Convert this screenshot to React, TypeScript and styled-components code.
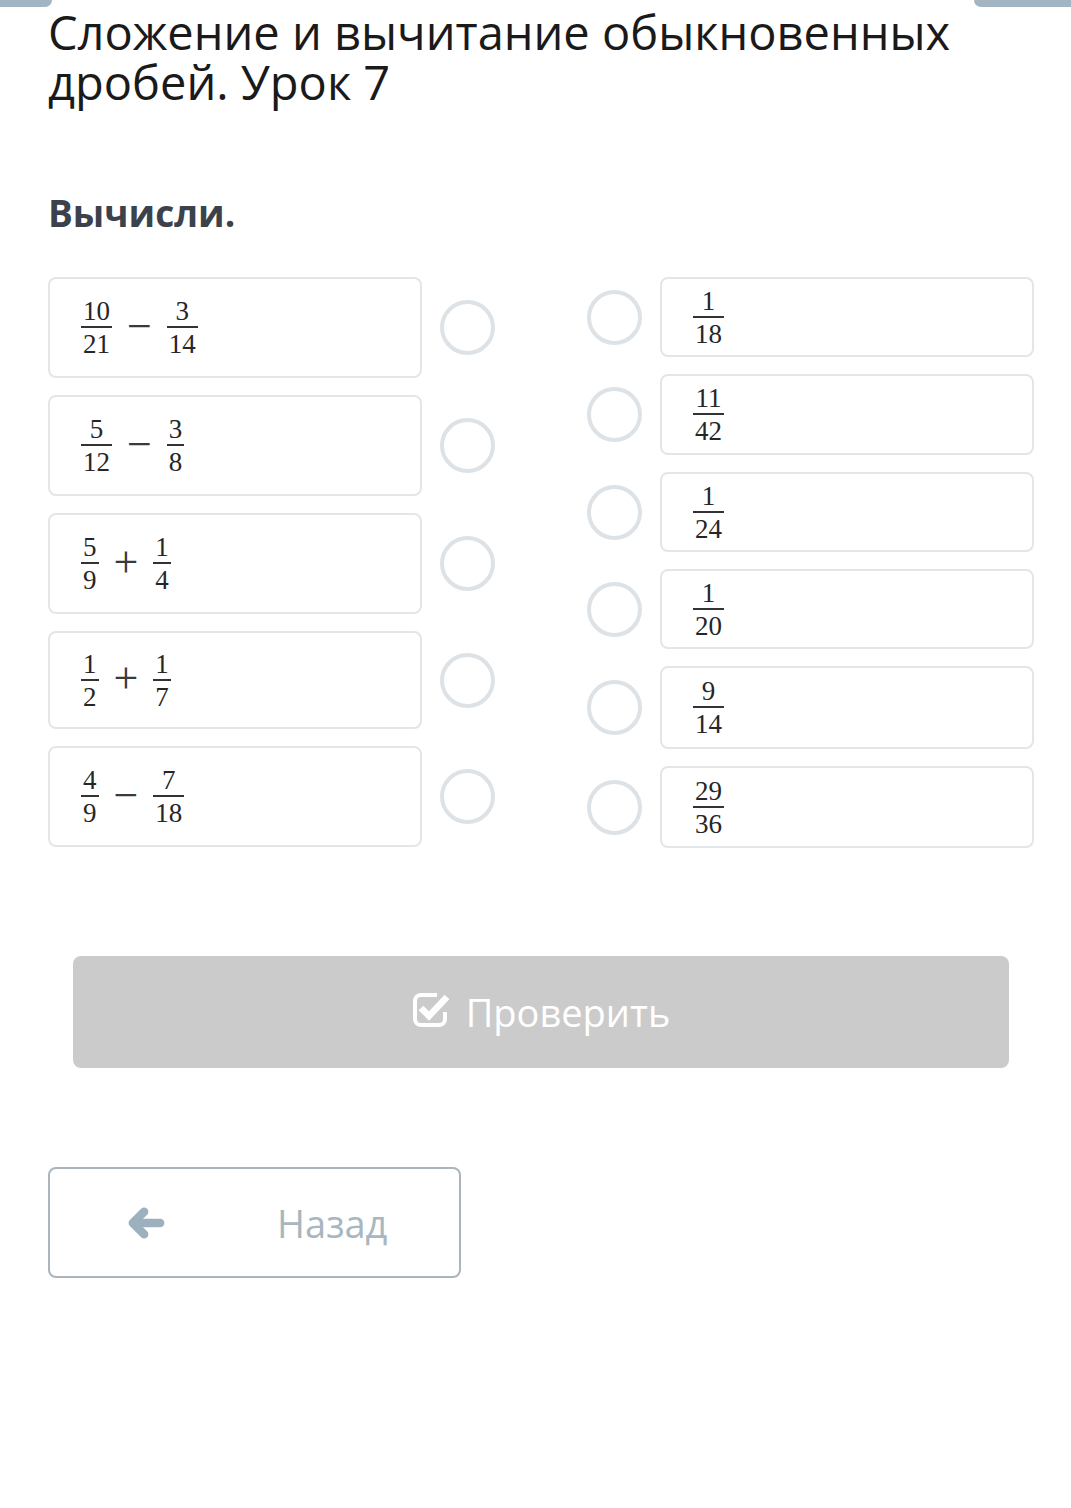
import React from "react";
import styled, { createGlobalStyle } from "styled-components";

const Global = createGlobalStyle`
  html, body { margin: 0; padding: 0; background: #ffffff; }
  body { font-family: "Open Sans", "Noto Sans", sans-serif; }
  * { box-sizing: border-box; }
`;

const Page = styled.div`
  width: 1071px;
  min-height: 1508px;
  background: #fff;
`;

const TopEdge = styled.div`
  display: flex;
  justify-content: space-between;
  height: 7px;
`;

const Tab = styled.div<{ $w: number; $side: "l" | "r" }>`
  width: ${(p) => p.$w}px;
  height: 7px;
  background: #a3b5c3;
  border-radius: ${(p) => (p.$side === "l" ? "0 0 12px 0" : "0 0 0 12px")};
`;

const Content = styled.div`
  padding: 0 37px 0 48px;
  display: flex;
  flex-direction: column;
`;

const Title = styled.h1`
  margin: 0;
  font-family: "Open Sans", sans-serif;
  font-weight: 400;
  font-size: 47px;
  line-height: 50px;
  color: #1a1a1a;
`;

const TitleLine = styled.span`
  display: block;
  height: 50px;
`;

const Task = styled.h2`
  margin: 84px 0 0 0;
  font-family: "Open Sans", sans-serif;
  font-weight: 700;
  font-size: 37px;
  line-height: 44px;
  color: #3b424c;
`;

const Columns = styled.div`
  margin-top: 42px;
  display: flex;
  justify-content: space-between;
`;

const Column = styled.div`
  display: flex;
  flex-direction: column;
  gap: 17px;
  width: 447px;
`;

const Row = styled.div`
  display: flex;
  align-items: center;
  gap: 18px;
`;

const Card = styled.div<{ $h: number }>`
  width: 374px;
  height: ${(p) => p.$h}px;
  border: 2px solid #e3e6e9;
  border-radius: 8px;
  display: flex;
  align-items: center;
  padding-left: 31px;
  background: #fff;
`;

const Circle = styled.div`
  width: 55px;
  height: 55px;
  border-radius: 50%;
  border: 4px solid #dde2e6;
  flex-shrink: 0;
`;

const Expr = styled.div`
  display: flex;
  align-items: center;
  gap: 15px;
  font-family: "Liberation Serif", "DejaVu Serif", serif;
  color: #262626;
`;

const Frac = styled.span`
  display: inline-flex;
  flex-direction: column;
  align-items: center;
  font-size: 27px;
  line-height: 26px;
`;

const Num = styled.span`
  padding: 0 2px 2px;
`;

const Den = styled.span`
  padding: 3px 2px 0;
  border-top: 2px solid #333;
  align-self: stretch;
  text-align: center;
`;

const Op = styled.span`
  font-size: 44px;
  line-height: 30px;
  color: #3a3a3a;
  margin-top: -2px;
`;

const Footer = styled.div`
  margin-top: 108px;
  display: flex;
  flex-direction: column;
`;

const CheckButton = styled.button`
  margin: 0 25px;
  height: 112px;
  border: none;
  border-radius: 8px;
  background: #cbcbcb;
  color: #fff;
  display: flex;
  align-items: center;
  justify-content: center;
  gap: 14px;
  font-family: "Open Sans", sans-serif;
  font-size: 38px;
  svg { width: 40px; height: 40px; margin-top: -4px; }
`;

const BackButton = styled.button`
  margin-top: 99px;
  width: 413px;
  height: 111px;
  border: 2px solid #aab5bc;
  border-radius: 8px;
  background: #fff;
  display: flex;
  align-items: center;
  padding-left: 77px;
  gap: 112px;
  font-family: "Open Sans", sans-serif;
  font-size: 38px;
  color: #a8b6c0;
  svg { width: 38px; height: 32px; }
`;

const CheckIcon = () => (
  <svg viewBox="0 0 40 40" fill="none">
    <path
      d="M25 5 H9 A6 6 0 0 0 3 11 V29 A6 6 0 0 0 9 35 H27 A6 6 0 0 0 33 29 V22"
      stroke="#fff"
      strokeWidth="4"
    />
    <path d="M9 18 L17 26 L35 7" stroke="#fff" strokeWidth="6.5" strokeLinejoin="miter" />
  </svg>
);

const ArrowIcon = () => (
  <svg viewBox="0 0 40 34" fill="none">
    <path d="M10 17 H35" stroke="#9cb0be" strokeWidth="9" strokeLinecap="round" />
    <path
      d="M18 5 L6 17 L18 29"
      stroke="#9cb0be"
      strokeWidth="9"
      strokeLinecap="round"
      strokeLinejoin="round"
    />
  </svg>
);

type F = [string, string];
type Item = { a: F; op?: string; b?: F; h: number };

const left: Item[] = [
  { a: ["10", "21"], op: "−", b: ["3", "14"], h: 101 },
  { a: ["5", "12"], op: "−", b: ["3", "8"], h: 101 },
  { a: ["5", "9"], op: "+", b: ["1", "4"], h: 101 },
  { a: ["1", "2"], op: "+", b: ["1", "7"], h: 98 },
  { a: ["4", "9"], op: "−", b: ["7", "18"], h: 101 },
];

const right: Item[] = [
  { a: ["1", "18"], h: 80 },
  { a: ["11", "42"], h: 81 },
  { a: ["1", "24"], h: 80 },
  { a: ["1", "20"], h: 80 },
  { a: ["9", "14"], h: 83 },
  { a: ["29", "36"], h: 82 },
];

const Fraction = ({ f }: { f: F }) => (
  <Frac>
    <Num>{f[0]}</Num>
    <Den>{f[1]}</Den>
  </Frac>
);

const Expression = ({ it }: { it: Item }) => (
  <Expr>
    <Fraction f={it.a} />
    {it.op && <Op>{it.op}</Op>}
    {it.b && <Fraction f={it.b} />}
  </Expr>
);

export default function App() {
  return (
    <Page>
      <Global />
      <TopEdge>
        <Tab $w={52} $side="l" />
        <Tab $w={97} $side="r" />
      </TopEdge>
      <Content>
        <Title>
          <TitleLine>Сложение и вычитание обыкновенных</TitleLine>
          <TitleLine>дробей. Урок 7</TitleLine>
        </Title>
        <Task>Вычисли.</Task>
        <Columns>
          <Column>
            {left.map((it, i) => (
              <Row key={i}>
                <Card $h={it.h}>
                  <Expression it={it} />
                </Card>
                <Circle />
              </Row>
            ))}
          </Column>
          <Column>
            {right.map((it, i) => (
              <Row key={i}>
                <Circle />
                <Card $h={it.h}>
                  <Expression it={it} />
                </Card>
              </Row>
            ))}
          </Column>
        </Columns>
        <Footer>
          <CheckButton>
            <CheckIcon />
            Проверить
          </CheckButton>
          <BackButton>
            <ArrowIcon />
            Назад
          </BackButton>
        </Footer>
      </Content>
    </Page>
  );
}
